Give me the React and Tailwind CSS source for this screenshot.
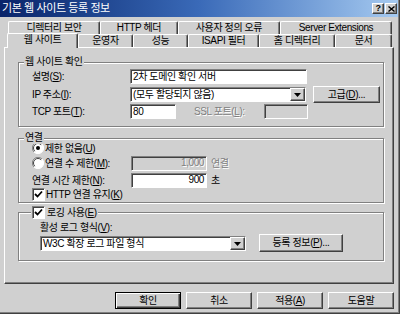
import React from "react";

const raised =
	"border border-t-white border-l-white border-r-[#404040] border-b-[#404040] shadow-[inset_-1px_-1px_0_#808080] bg-[#d0d0d0]";
const sunken =
	"border border-t-[#808080] border-l-[#808080] border-r-white border-b-white shadow-[inset_1px_1px_0_#404040]";
const etched =
	"relative border border-[#808080] shadow-[inset_1px_1px_0_#fff,1px_1px_0_#fff] w-[366px]";
const disabled = "text-[#808080] [text-shadow:1px_1px_0_#fff]";

const U = ({ children }) => <span className="underline">{children}</span>;

const Arrow = () => (
	<svg width="7" height="4" viewBox="0 0 7 4">
		<polygon points="0,0 7,0 3.5,4" fill="#000" />
	</svg>
);

const Radio = ({ checked }) => (
	<svg width="12" height="12" viewBox="0 0 12 12" className="shrink-0">
		<circle cx="6" cy="6" r="5.5" fill="#fff" />
		<path d="M10 2 A5.5 5.5 0 0 0 2 10" fill="none" stroke="#808080" />
		<path d="M9.2 2.8 A4.5 4.5 0 0 0 2.8 9.2" fill="none" stroke="#404040" />
		<path d="M2 10 A5.5 5.5 0 0 0 10 2" fill="none" stroke="#fff" />
		{checked && <circle cx="6" cy="6" r="2" fill="#000" />}
	</svg>
);

const Check = () => (
	<span className={`${sunken} bg-white w-[13px] h-[13px] shrink-0 flex items-center justify-center`}>
		<svg width="9" height="9" viewBox="0 0 9 9">
			<path d="M1 4 L3.5 6.5 L8 1.5" fill="none" stroke="#000" strokeWidth="1.8" />
		</svg>
	</span>
);

const Select = ({ w, children }) => (
	<div className={`${sunken} bg-white h-[15px] ${w} flex items-center justify-between`}>
		<span className="pl-[2px] leading-none whitespace-nowrap">{children}</span>
		<span className={`${raised} w-[15px] h-[13px] flex items-center justify-center`}>
			<Arrow />
		</span>
	</div>
);

const Tab = ({ w, children }) => (
	<div
		className={`${w} h-[13px] border border-b-0 border-t-white border-l-white border-r-[#404040] shadow-[inset_-1px_0_0_#808080] rounded-t-[2px] flex items-center justify-center whitespace-nowrap leading-none`}
	>
		{children}
	</div>
);

export default function App() {
	return (
		<div className="w-[400px] h-[314px] bg-[#d0d0d0] overflow-hidden border-r border-b border-[#404040] shadow-[inset_-1px_-1px_0_#808080] font-['Liberation_Sans','Noto_Sans_CJK_KR',sans-serif] text-[10px] tracking-[-0.4px] text-black">
			{/* title bar */}
			<div className="h-[17px] mr-[1px] bg-gradient-to-r from-[#0a246a] via-[#3a6ab8] to-[#a6caf0] flex items-center justify-between pl-[2px] pr-[1px]">
				<span className="text-white text-[11px] leading-none">기본 웹 사이트 등록 정보</span>
				<div className="flex gap-[1px]">
					<span className={`${raised} w-[12px] h-[11px] flex items-center justify-center text-[9px] font-bold leading-none`}>?</span>
					<span className={`${raised} w-[12px] h-[11px] flex items-center justify-center`}>
						<svg width="7" height="6" viewBox="0 0 7 6">
							<path d="M0.5 0.5 L6.5 5.5 M6.5 0.5 L0.5 5.5" stroke="#000" strokeWidth="1.4" />
						</svg>
					</span>
				</div>
			</div>

			{/* tabs */}
			<div className="pt-[4px]">
				<div className="flex pl-[8px]">
					<Tab w="w-[92px]">디렉터리 보안</Tab>
					<Tab w="w-[78px]">HTTP 헤더</Tab>
					<Tab w="w-[102px]">사용자 정의 오류</Tab>
					<Tab w="w-[112px]">Server Extensions</Tab>
				</div>
				<div className="flex pl-[7px] h-[13px] items-end">
					<div className="relative z-10 w-[71px] h-[15px] -mb-[1px] bg-[#d0d0d0] border border-b-0 border-t-white border-l-white border-r-[#404040] shadow-[inset_-1px_0_0_#808080] rounded-t-[2px] flex items-start pt-[1px] justify-center leading-none">
						웹 사이트
					</div>
					<Tab w="w-[55px]">운영자</Tab>
					<Tab w="w-[55px]">성능</Tab>
					<Tab w="w-[71px]">ISAPI 필터</Tab>
					<Tab w="w-[76px]">홈 디렉터리</Tab>
					<Tab w="w-[57px]">문서</Tab>
				</div>
			</div>

			{/* panel */}
			<div className={`${raised} ml-[4px] w-[390px] h-[237px] pl-[13px] pt-[14px]`}>
				{/* 웹 사이트 확인 */}
				<div className={`${etched} h-[65px] pt-[6px] pl-[13px]`}>
					<span className="absolute -top-[8px] left-[5px] px-[1px] bg-[#d0d0d0] leading-[13px]">웹 사이트 확인</span>
					<div className="flex items-center h-[15px]">
						<span className="w-[98px]">설명(<U>S</U>):</span>
						<div className={`${sunken} bg-white w-[177px] h-[15px] pl-[2px] flex items-center leading-none`}>
							2차 도메인 확인 서버
						</div>
					</div>
					<div className="flex items-center h-[17px] mt-[2px]">
						<span className="w-[98px]">IP 주소(<U>I</U>):</span>
						<Select w="w-[176px]">(모두 할당되지 않음)</Select>
						<div className={`${raised} ml-[7px] w-[67px] h-[17px] flex items-center justify-center leading-none`}>
							고급(<U>D</U>)...
						</div>
					</div>
					<div className="flex items-center h-[15px] mt-[1px]">
						<span className="w-[98px]">TCP 포트(<U>T</U>):</span>
						<div className={`${sunken} bg-white w-[46px] h-[15px] pl-[2px] flex items-center leading-none`}>80</div>
						<span className={`ml-[18px] w-[70px] ${disabled}`}>SSL 포트(<U>L</U>):</span>
						<div className={`${sunken} bg-[#d0d0d0] w-[44px] h-[15px]`} />
					</div>
				</div>

				{/* 연결 */}
				<div className={`${etched} h-[65px] mt-[11px] pt-[2px] pl-[13px]`}>
					<span className="absolute -top-[8px] left-[5px] px-[1px] bg-[#d0d0d0] leading-[13px]">연결</span>
					<div className="flex items-center h-[14px] gap-[1px]">
						<Radio checked />
						<span>제한 없음(<U>U</U>)</span>
					</div>
					<div className="flex items-center h-[16px]">
						<Radio />
						<span className="ml-[1px] w-[86px]">연결 수 제한(<U>M</U>):</span>
						<div className={`${sunken} bg-[#d0d0d0] w-[76px] h-[15px] pr-[2px] flex items-center justify-end leading-none ${disabled}`}>
							1,000
						</div>
						<span className={`ml-[4px] ${disabled}`}>연결</span>
					</div>
					<div className="flex items-center h-[16px] mt-[1px]">
						<span className="w-[99px]">연결 시간 제한(<U>N</U>):</span>
						<div className={`${sunken} bg-white w-[76px] h-[15px] pr-[2px] flex items-center justify-end leading-none`}>900</div>
						<span className="ml-[4px]">초</span>
					</div>
					<div className="flex items-center h-[13px] gap-[1px]">
						<Check />
						<span>HTTP 연결 유지(<U>K</U>)</span>
					</div>
				</div>

				{/* 로깅 사용 */}
				<div className={`${etched} h-[49px] mt-[9px] pt-[9px] pl-[21px]`}>
					<span className="absolute -top-[7px] left-[12px] px-[1px] bg-[#d0d0d0] flex items-center gap-[2px] leading-[13px]">
						<Check />
						<span>로깅 사용(<U>E</U>)</span>
					</span>
					<div className="h-[12px] leading-[12px]">활성 로그 형식(<U>V</U>):</div>
					<div className="flex items-start">
						<div className="mt-[2px]">
							<Select w="w-[206px]">W3C 확장 로그 파일 형식</Select>
						</div>
						<div className={`${raised} ml-[13px] w-[84px] h-[18px] flex items-center justify-center leading-none`}>
							등록 정보(<U>P</U>)...
						</div>
					</div>
				</div>
			</div>

			{/* dialog buttons */}
			<div className="flex pl-[115px] gap-[5px] mt-[8px]">
				<div className="w-[66px] h-[17px] bg-[#d0d0d0] border border-black shadow-[inset_1px_1px_0_#fff,inset_-1px_-1px_0_#404040,inset_-2px_-2px_0_#808080] flex items-center justify-center leading-none">
					확인
				</div>
				<div className={`${raised} w-[66px] h-[17px] flex items-center justify-center leading-none`}>취소</div>
				<div className={`${raised} w-[66px] h-[17px] flex items-center justify-center leading-none`}>
					적용(<U>A</U>)
				</div>
				<div className={`${raised} w-[66px] h-[17px] flex items-center justify-center leading-none`}>도움말</div>
			</div>
		</div>
	);
}
